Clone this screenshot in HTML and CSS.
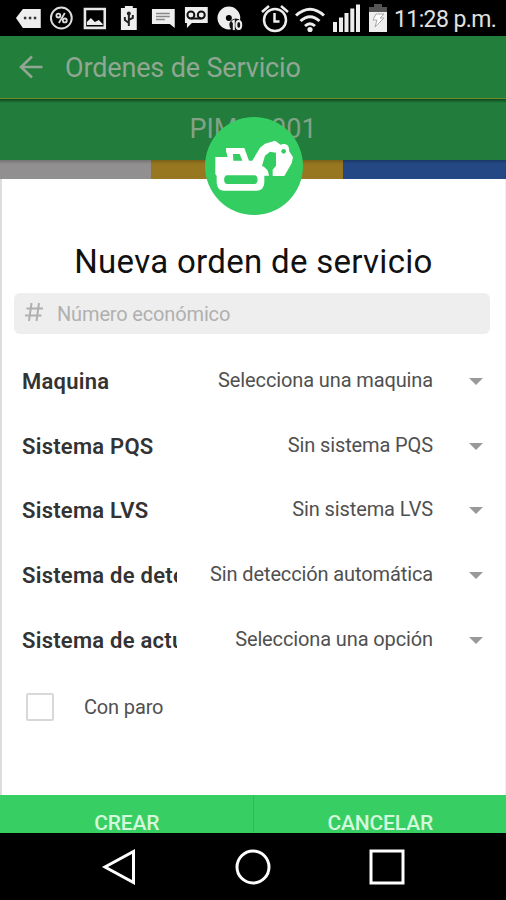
FILE: index.html
```
<!DOCTYPE html>
<html lang="es">
<head>
<meta charset="UTF-8">
<meta name="viewport" content="width=device-width, initial-scale=1">
<title>Ordenes de Servicio</title>
<link rel="stylesheet" href="styles.css">
</head>
<body>
    <div class="status-bar">
        <div class="notifications">
            <svg viewBox="0 0 34 36"><path d="M5 18l7-9h18v19H12z" fill="#eee"/><path d="M13 18h2.500M18 18h2.500M23 18h2.500" stroke="#333" stroke-width="2.500"/></svg>
            <svg viewBox="0 0 34 36"><circle cx="16.500" cy="18" r="10.500" fill="none" stroke="#ddd" stroke-width="2"/><path d="M20 13l-6 10" stroke="#ddd" stroke-width="1.800"/><circle cx="13.500" cy="15.500" r="2" fill="none" stroke="#ddd" stroke-width="1.800"/><circle cx="20" cy="20.500" r="2" fill="none" stroke="#ddd" stroke-width="1.800"/></svg>
            <svg viewBox="0 0 34 36"><path d="M7 9h20v19H7z" fill="none" stroke="#e8e8e8" stroke-width="2.600"/><path d="M9 25v-3l4-4 4 4 4-2 4 4v1z" fill="#eee"/></svg>
            <svg viewBox="0 0 34 36"><path d="M13 6h8v2h4v22H9V8h4z" fill="#eee"/><path d="M17 12v14M13 17v3l4 3M21 15v3l-4 2" fill="none" stroke="#222" stroke-width="2"/><circle cx="17" cy="13.500" r="2" fill="#222"/></svg>
            <svg viewBox="0 0 34 36"><path d="M6 9h23v19l-5-4H6z" fill="#eee"/><path d="M10 13.500h14M10 16.500h14M10 19.500h9" stroke="#888" stroke-width="1.500"/></svg>
            <svg viewBox="0 0 34 36"><path d="M6 7h23v16H13l-5 5v-5H6z" fill="#eee"/><g fill="none" stroke="#111" stroke-width="2"><circle cx="12" cy="15" r="3.500"/><circle cx="22.500" cy="15" r="3.500"/><path d="M12 18.500h10.500"/></g></svg>
            <svg viewBox="0 0 34 36"><circle cx="16" cy="18" r="11.500" fill="#eee"/><circle cx="16" cy="18" r="3" fill="#000"/><circle cx="23" cy="25" r="6.500" fill="#111"/><path d="M19 22l2-1v9" fill="none" stroke="#eee" stroke-width="2"/><ellipse cx="26" cy="25" rx="2.500" ry="4" fill="none" stroke="#eee" stroke-width="2"/></svg>
        </div>
        <div class="system">
            <svg class="alarm" viewBox="0 0 30 36"><g fill="none" stroke="#eee" stroke-width="2.500"><circle cx="15" cy="20" r="11"/><path d="M14.500 13v8.500h5M2 12l7-6M21 6l7 6"/></g></svg>
            <svg class="wifi" viewBox="0 0 34 36"><g fill="none" stroke="#eee" stroke-width="3"><path d="M3 15.500q14-12.500 28 0M7.500 21q9.500-8.500 19 0M12 26q5-4.500 10 0"/></g><circle cx="17" cy="29.500" r="2.600" fill="#eee"/></svg>
            <svg class="signal" viewBox="0 0 30 36"><path d="M1 22h4v10H1zM7 17.500h4V32H7zM12.500 13h4v19h-4zM18.300 8.500h4V32h-4zM24 4.500h4V32h-4z" fill="#eee"/></svg>
            <svg class="battery" viewBox="0 0 20 36"><path d="M6 4h8v3h5v25H1V7h5z" fill="#eee"/><path d="M6 4h8v3h5v5H1V7h5z" fill="#555"/><path d="M8 14h8l-4 4h4l-9 9 2-7H5z" fill="#fff" stroke="#aaa"/></svg>
            <span class="clock">11:28 p.m.</span>
        </div>
    </div>

    <div class="header">
        <svg class="back" viewBox="0 0 24 24"><path d="M23.500 12H2M13 1.500L2 12l11 10.500" fill="none" stroke="#91a693" stroke-width="2.600"/></svg>
        <span class="header-title">Ordenes de Servicio</span>
    </div>
    <div class="project">PIMSA001</div>
    <div class="tabs">
        <div class="tab gray"></div>
        <div class="tab yellow"></div>
        <div class="tab blue"></div>
    </div>

    <div class="modal">
        <div class="badge">
            <svg viewBox="-15 -54 294 294">
                <path fill="#fff" fill-rule="evenodd" d="M16 66h37l-5-18V39h55l14 38h10l23-39 15-12 30-9 17 12c16-6 27 3 25 18l12 20-4 18-22 38h-35v-19l10-12V53l-18-3-15 12-9 30q19 8 21 30h-14v21q-2 24-24 24H42q-20 0-22-24v-21l-4-4zM69 57h20l8 20H70zM52 121h81c13 0 13 26 0 26H52c-13 0-13-26 0-26z"/>
                <circle cx="221" cy="49" r="7" fill="#34cd61"/>
            </svg>
        </div>
        <h1>Nueva orden de servicio</h1>
        <label class="field">
            <svg viewBox="0 0 18 20"><path d="M6.500 1L4 19M14 1l-2.500 18M1.500 6.500H18M0 13.500h16.500" fill="none" stroke="#b0b0b0" stroke-width="2"/></svg>
            <span>Número económico</span>
        </label>
        <div class="rows">
            <div class="row"><b>Maquina</b><span>Selecciona una maquina</span><i class="caret"></i></div>
            <div class="row"><b>Sistema PQS</b><span>Sin sistema PQS</span><i class="caret"></i></div>
            <div class="row"><b>Sistema LVS</b><span>Sin sistema LVS</span><i class="caret"></i></div>
            <div class="row"><b>Sistema de detección</b><span>Sin detección automática</span><i class="caret"></i></div>
            <div class="row"><b>Sistema de actuación</b><span>Selecciona una opción</span><i class="caret"></i></div>
        </div>
        <div class="check-row">
            <div class="checkbox"></div>
            <span>Con paro</span>
        </div>
    </div>

    <div class="buttons">
        <div class="button">CREAR</div>
        <div class="button">CANCELAR</div>
    </div>

    <div class="nav-bar">
        <svg viewBox="0 0 36 36"><path d="M32.500 2.500v31L4 18z"/></svg>
        <svg viewBox="0 0 36 36"><circle cx="18" cy="18" r="16"/></svg>
        <svg viewBox="0 0 36 36"><path d="M2 2h32v32H2z"/></svg>
    </div>
</body>
</html>
```
FILE: styles.css
```
* { padding: 0; margin: 0; box-sizing: border-box; }
body {
    display: flex;
    flex-direction: column;
    width: 506px;
    height: 900px;
    overflow: hidden;
    background: #000;
    font-family: Roboto, "Liberation Sans", sans-serif;
    white-space: nowrap;
}
svg {
    display: block;
    flex: none;
}
.status-bar {
    display: flex;
    justify-content: space-between;
    height: 36px;
    padding: 0 10px 0 11px;
    background: #000;
}
.notifications,
.system {
    display: flex;
}
.notifications svg {
    width: 33.700px;
    height: 36px;
}
.system svg {
    height: 36px;
}
.alarm { width: 30px; margin-right: 3px; }
.wifi { width: 34px; margin-right: 5px; }
.signal { width: 30px; margin-right: 6px; }
.battery { width: 20px; margin-right: 6px; }
.clock {
    width: 102px;
    color: #e0e0e0;
    font-size: 23px;
    letter-spacing: -.6px;
    line-height: 39px;
}
.header {
    display: flex;
    align-items: center;
    height: 63px;
    padding-left: 19px;
    background: #227f3b;
    border-bottom: 1px solid #718a25;
}
.back {
    width: 24px;
    height: 24px;
}
.header-title {
    margin: 2px 0 0 22px;
    color: #91a693;
    font-size: 27px;
    letter-spacing: -.15px;
}
.project {
    height: 61px;
    color: #82a288;
    background: linear-gradient(#0d481e, #227c3b 4px);
    font-size: 27px;
    line-height: 60px;
    text-align: center;
}
.tabs {
    display: flex;
    height: 19px;
}
.tab {
    box-shadow: inset 0 4px 3px -2px rgba(0, 0, 0, .2);
}
.gray { width: 151px; background: #918f90; }
.yellow { width: 192px; background: #977820; }
.blue { width: 163px; background: #234884; }
.modal {
    position: relative;
    height: 616px;
    padding-top: 62px;
    background: #fff;
    border-left: 2px solid #dcdcdc;
    border-right: 1px solid #eee;
}
.badge {
    position: absolute;
    top: -62px;
    left: 203px;
    width: 98px;
    height: 98px;
    border-radius: 50%;
    background: #34cd61;
}
h1 {
    height: 52px;
    color: #111;
    font-size: 33px;
    font-weight: 400;
    letter-spacing: .3px;
    line-height: 42px;
    text-align: center;
}
.field {
    display: flex;
    align-items: center;
    height: 41px;
    margin: 0 15px 0 12px;
    padding-left: 11px;
    border-radius: 6px;
    background: #eee;
    color: #b0b0b0;
    font-size: 20px;
    letter-spacing: -.15px;
}
.field svg {
    width: 18px;
    height: 20px;
    margin: -4px 14px 0 0;
}
.rows {
    padding-top: 15px;
}
.row {
    display: flex;
    align-items: center;
    height: 64.700px;
    padding: 0 22px 0 20px;
}
.row b {
    width: 155px;
    overflow: hidden;
    color: #333;
    font-size: 22px;
    font-weight: 600;
    letter-spacing: .25px;
}
.row span {
    flex: 1;
    margin-top: -3px;
    color: #505050;
    font-size: 20px;
    letter-spacing: -.12px;
    text-align: right;
}
.caret {
    margin-left: 36px;
    border: 7px solid transparent;
    border-top-color: #999;
    border-bottom: 0;
}
.check-row {
    display: flex;
    align-items: center;
    height: 69px;
    padding-left: 24px;
    color: #505050;
    font-size: 20px;
    letter-spacing: -.15px;
}
.checkbox {
    width: 28px;
    height: 28px;
    margin: 1px 30px 0 0;
    border: 2px solid #d8d8d8;
    border-radius: 2px;
}
.buttons {
    display: flex;
    height: 38px;
    overflow: hidden;
    background: #37cf63;
}
.button {
    flex: 1;
    padding-left: 1px;
    color: #d3f8dc;
    font-size: 21px;
    font-weight: 500;
    letter-spacing: -.15px;
    line-height: 56px;
    text-align: center;
}
.button:first-child {
    border-right: 1px solid #38b45a;
}
.nav-bar {
    display: flex;
    justify-content: center;
    align-items: center;
    gap: 98px;
    height: 67px;
    background: #000;
}
.nav-bar svg {
    width: 36px;
    height: 36px;
    fill: none;
    stroke: #fff;
    stroke-width: 3;
}
```
